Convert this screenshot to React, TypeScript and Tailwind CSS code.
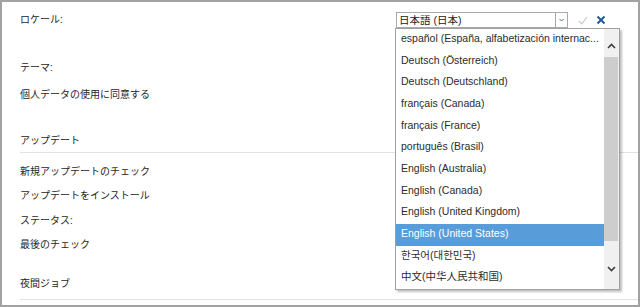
const languages = [
  'español (España, alfabetización internac...',
  'Deutsch (Österreich)',
  'Deutsch (Deutschland)',
  'français (Canada)',
  'français (France)',
  'português (Brasil)',
  'English (Australia)',
  'English (Canada)',
  'English (United Kingdom)',
  'English (United States)',
  '한국어(대한민국)',
  '中文(中华人民共和国)',
]

const SELECTED = 'English (United States)'

function Chevron({ up = false, className = '' }: { up?: boolean; className?: string }) {
  return (
    <svg width="9" height="6" viewBox="0 0 9 6" className={className}>
      <polyline
        points={up ? '1,5 4.5,1.5 8,5' : '1,1 4.5,4.5 8,1'}
        fill="none"
        stroke="#3c3c3c"
        strokeWidth="1.6"
      />
    </svg>
  )
}

function LocaleSelect() {
  return (
    <div className="flex items-center self-end mb-[1px]">
      <div className="w-[172px] h-[16px] border border-[#a9a9a9] bg-white flex items-center">
        <span className="flex-1 pl-[2px] text-[10.5px] text-[#222] leading-none">日本語 (日本)</span>
        <div className="w-[12px] h-full border-l border-[#a9a9a9] flex items-center justify-center">
          <svg width="5" height="4" viewBox="0 0 5 4">
            <polyline points="0.5,1 2.5,3 4.5,1" fill="none" stroke="#4a6b95" strokeWidth="1" />
          </svg>
        </div>
      </div>
      <svg width="10" height="9" viewBox="0 0 10 9" className="ml-[10px]">
        <polyline points="1,5 3.8,7.8 9,1" fill="none" stroke="#c9c9c9" strokeWidth="1.2" />
      </svg>
      <svg width="10" height="10" viewBox="0 0 10 10" className="ml-[8px]">
        <path d="M1.5 1.5 L8.5 8.5 M8.5 1.5 L1.5 8.5" stroke="#1f5c9c" strokeWidth="2" />
      </svg>
    </div>
  )
}

function LocaleDropdown() {
  return (
    <div className="absolute left-[393px] top-[26px] w-[225px] h-[262px] border border-[#a0a0a0] bg-white shadow-[2px_2px_2px_rgba(0,0,0,0.25)] flex">
      <div className="flex-1 min-w-0 flex flex-col">
        {languages.map((lang) => {
          const active = lang === SELECTED
          return (
            <div
              key={lang}
              className={
                active
                  ? 'h-[21.67px] flex items-center pl-[5px] pr-[4px] pb-[3px] bg-[#589cda] text-white'
                  : 'h-[21.67px] flex items-center pl-[5px] pr-[4px] pb-[3px] text-[#2b2b2b]'
              }
            >
              <span className="whitespace-nowrap text-[10.5px] leading-none">{lang}</span>
            </div>
          )
        })}
      </div>
      <div className="w-[15px] bg-[#f0f0f0] flex flex-col">
        <div className="h-[28px] flex items-center justify-center pt-[5px]">
          <Chevron up />
        </div>
        <div className="h-[184px] bg-[#cdcdcd] mr-[1px]" />
        <div className="flex-1 flex items-center justify-center pt-[7px]">
          <Chevron />
        </div>
      </div>
    </div>
  )
}

export default function App() {
  return (
    <div
      className="w-[640px] h-[307px] bg-white border-2 border-[#a2a2a2] relative overflow-hidden text-[10px] text-[#262626]"
      style={{ fontFamily: "'Liberation Sans', 'Noto Sans CJK JP', 'Noto Sans CJK KR', 'Noto Sans CJK SC', sans-serif" }}
    >
      <div className="pl-[18px]">
        <div className="mt-[7px] h-[20px] flex items-center">
          <span className="w-[376px]">ロケール:</span>
          <LocaleSelect />
        </div>
        <div className="mt-[28px] h-[20px] flex items-center">テーマ:</div>
        <div className="mt-[7px] h-[20px] flex items-center">個人データの使用に同意する</div>

        <div className="mt-[26px] h-[23px] border-b border-[#e2e2e2]">
          <span className="block leading-[21px] text-[#1a1a1a]">アップデート</span>
        </div>
        <div className="mt-[6px]">
          {['新規アップデートのチェック', 'アップデートをインストール', 'ステータス:', '最後のチェック'].map((t) => (
            <div key={t} className="h-[24.5px] flex items-center">
              {t}
            </div>
          ))}
        </div>

        <div className="mt-[17px] h-[26px] border-b border-[#e2e2e2]">
          <span className="block leading-[20px] text-[#1a1a1a]">夜間ジョブ</span>
        </div>
      </div>

      <LocaleDropdown />
    </div>
  )
}
